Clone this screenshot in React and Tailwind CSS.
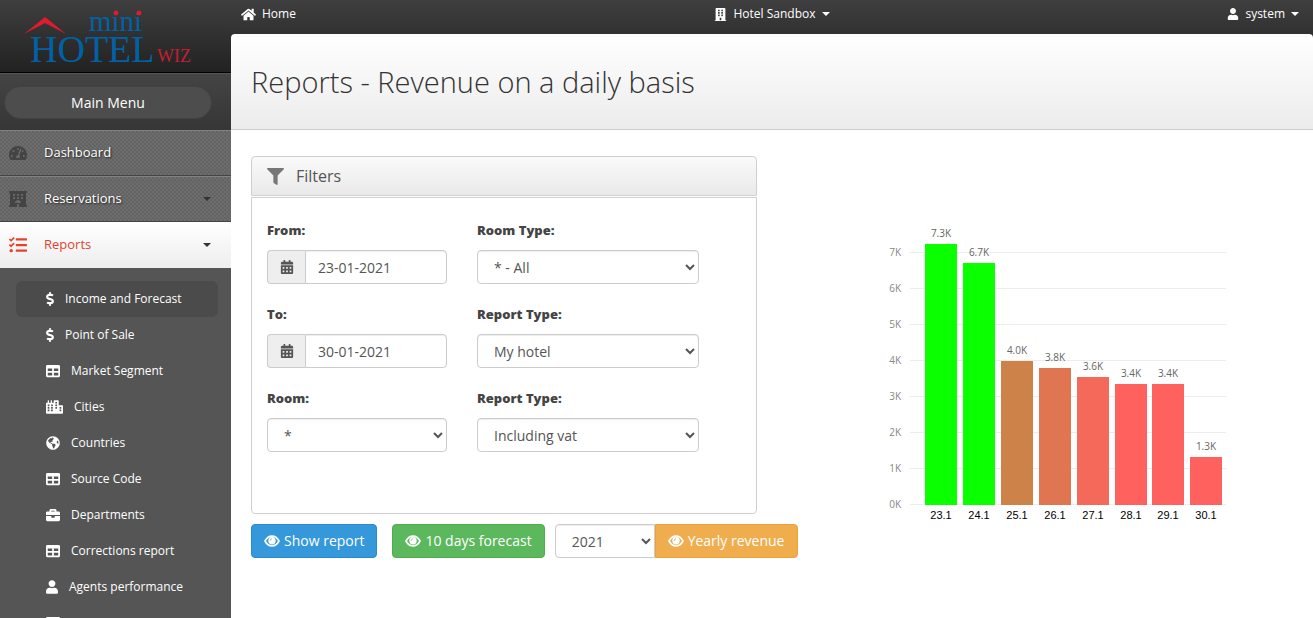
import { useState } from 'react';
import {
  FaBriefcase,
  FaBuilding,
  FaCalendarAlt,
  FaCity,
  FaDollarSign,
  FaFilter,
  FaGlobeAmericas,
  FaHome,
  FaHotel,
  FaTable,
  FaTachometerAlt,
  FaTasks,
  FaUser,
} from 'react-icons/fa';

const reportLinks = [
  { label: 'Income and Forecast', icon: FaDollarSign, iconClass: 'w-2' },
  { label: 'Point of Sale', icon: FaDollarSign, iconClass: 'w-2' },
  { label: 'Market Segment', icon: FaTable, iconClass: 'w-3.5' },
  { label: 'Cities', icon: FaCity, iconClass: 'w-[17px]' },
  { label: 'Countries', icon: FaGlobeAmericas, iconClass: 'w-3.5' },
  { label: 'Source Code', icon: FaTable, iconClass: 'w-3.5' },
  { label: 'Departments', icon: FaBriefcase, iconClass: 'w-3.5' },
  { label: 'Corrections report', icon: FaTable, iconClass: 'w-3.5' },
  { label: 'Agents performance', icon: FaUser, iconClass: 'w-3' },
  { label: '', icon: FaTable, iconClass: 'w-3.5' },
];

const revenue = [
  { day: '23.1', value: 7250, label: '7.3K', color: '#0aff00' },
  { day: '24.1', value: 6720, label: '6.7K', color: '#0aff00' },
  { day: '25.1', value: 4000, label: '4.0K', color: '#cc8249' },
  { day: '26.1', value: 3805, label: '3.8K', color: '#e07552' },
  { day: '27.1', value: 3555, label: '3.6K', color: '#f5695b' },
  { day: '28.1', value: 3360, label: '3.4K', color: '#ff615e' },
  { day: '29.1', value: 3360, label: '3.4K', color: '#ff615e' },
  { day: '30.1', value: 1330, label: '1.3K', color: '#ff615e' },
];

const field = 'h-[34px] border border-[#ccc] bg-white text-sm text-[#555] shadow-[inset_0_1px_1px_rgba(0,0,0,0.075)]';
const fieldLabel = 'mb-[10px] block text-[13px] leading-5 font-extrabold text-[#444]';

function Logo() {
  return (
    <svg width="200" height="72" viewBox="0 0 200 72" role="img" aria-label="mini Hotel Wiz">
      <path d="M24 34 L45 17 L66 34 L45 23 Z" fill="#e01b2d" />
      <g fontFamily="Liberation Serif, serif">
        <text x="89" y="31" fontSize="29" fill="#0062a5">mini</text>
        <text x="30" y="62" fontSize="38" fill="#0062a5">HOTEL</text>
        <text x="157" y="62" fontSize="18" fill="#c3202f">WIZ</text>
      </g>
      <circle cx="116" cy="13" r="2.4" fill="#e01b2d" />
      <circle cx="139" cy="13" r="2.4" fill="#e01b2d" />
    </svg>
  );
}

function EyeIcon() {
  return (
    <svg width="16" height="14" viewBox="0 0 16 14" fill="none" aria-hidden="true">
      <path d="M1 7 C3 3.4 5.4 2.2 8 2.2 C10.6 2.2 13 3.4 15 7 C13 10.8 10.6 12 8 12 C5.4 12 3 10.8 1 7 Z" stroke="currentColor" strokeWidth="1.7" />
      <circle cx="8" cy="6.8" r="3.7" fill="currentColor" />
      <path d="M6.2 6.8 C6.2 5.6 6.9 4.9 8 4.9" stroke="#000000" strokeOpacity="0.3" />
    </svg>
  );
}

function Caret({ className }) {
  return (
    <svg width="8" height="4" viewBox="0 0 8 4" className={className} aria-hidden="true">
      <path d="M0 0 H8 L4 4 Z" fill="currentColor" />
    </svg>
  );
}

/** One row of the main navigation */
function NavItem({ icon: Icon, label, active, expandable }) {
  return (
    <a
      href="#"
      className={`flex h-[46px] items-center border-b pl-[9px] pr-5 text-[13px] ${
        active
          ? 'border-[#eee] bg-linear-to-b from-white to-[#eee] text-[#e5412d]'
          : 'border-[#444] border-t border-t-[#828282] bg-[#686868] bg-[conic-gradient(#6d6d6d_25%,#636363_0_50%,#6d6d6d_0_75%,#636363_0)] bg-size-[4px_4px] text-white [text-shadow:1px_1px_2px_rgba(0,0,0,0.7)]'
      }`}
    >
      <Icon className={`size-[18px] ${active ? 'text-[#e5412d]' : 'text-[#444]'}`} />
      <span className="ml-[17px] grow">{label}</span>
      {expandable && <Caret className="text-[#333]" />}
    </a>
  );
}

function Sidebar() {
  return (
    <aside className="flex w-[231px] shrink-0 flex-col overflow-hidden bg-[#555]">
      <a href="#" className="block h-[73px] shrink-0 border-b border-black bg-linear-to-b from-[#3f3f3f] to-[#222]">
        <Logo />
      </a>
      <div className="shrink-0 border-t border-[#555] bg-linear-to-b from-[#444] to-[#363636] pt-3 pb-[11px] pl-1">
        <button className="h-[33px] w-52 rounded-full border border-[#424242] bg-[#4d4d4d] text-sm text-white">
          Main Menu
        </button>
      </div>
      <nav className="shrink-0">
        <NavItem icon={FaTachometerAlt} label="Dashboard" />
        <NavItem icon={FaHotel} label="Reservations" expandable />
        <NavItem icon={FaTasks} label="Reports" active expandable />
        <ul className="px-4 pt-[13px]">
          {reportLinks.map(({ label, icon: Icon, iconClass }, index) => (
            <li key={index} className="w-[202px]">
              <a
                href="#"
                className={`flex h-9 items-center gap-[11px] rounded-md pl-[30px] text-xs text-white ${
                  index === 0 ? 'bg-[#4b4b4b]' : ''
                }`}
              >
                <Icon className={`h-3.5 ${iconClass}`} />
                {label}
              </a>
            </li>
          ))}
        </ul>
      </nav>
    </aside>
  );
}

function TopBar() {
  return (
    <div className="grid h-[34px] grid-cols-[1fr_auto_1fr] items-start px-[10px] pt-1 text-xs leading-5 text-white">
      <a href="#" className="flex items-center gap-1.5 justify-self-start">
        <FaHome className="size-[15px]" /> Home
      </a>
      <button className="flex items-center gap-1.5">
        <FaBuilding className="size-[13px]" /> Hotel Sandbox <Caret />
      </button>
      <button className="flex items-center gap-1.5 justify-self-end pr-1">
        <FaUser className="size-3" /> system <Caret />
      </button>
    </div>
  );
}

function SelectField({ id, label, options }) {
  return (
    <div>
      <label htmlFor={id} className={fieldLabel}>{label}</label>
      <select id={id} className={`${field} w-full rounded px-3`}>
        {options.map((option) => (
          <option key={option}>{option}</option>
        ))}
      </select>
    </div>
  );
}

function DateField({ id, label, value, onChange }) {
  return (
    <div>
      <label htmlFor={id} className={fieldLabel}>{label}</label>
      <div className="flex">
        <span className="flex w-[38px] shrink-0 items-center justify-center rounded-l border border-r-0 border-[#ccc] bg-[#eee] text-[#555]">
          <FaCalendarAlt className="size-3.5" />
        </span>
        <input
          id={id}
          type="text"
          value={value}
          onChange={(e) => onChange(e.target.value)}
          className={`${field} w-full min-w-0 rounded-r px-3`}
        />
      </div>
    </div>
  );
}

function Filters() {
  const [from, setFrom] = useState('23-01-2021');
  const [to, setTo] = useState('30-01-2021');

  return (
    <section className="self-start">
      <div className="mb-px flex h-10 items-center gap-3 rounded-t border border-[#d0d0d0] bg-linear-to-b from-[#fafafa] to-[#e9e9e9] pl-[15px]">
        <FaFilter className="size-[17px] text-[#777]" />
        <h2 className="text-base text-[#555]">Filters</h2>
      </div>
      <div className="grid grid-cols-[180px_222px] gap-x-[30px] gap-y-5 rounded-b border border-[#d0d0d0] px-[15px] pt-[22px] pb-[61px]">
        <DateField id="from" label="From:" value={from} onChange={setFrom} />
        <SelectField id="room-type" label="Room Type:" options={['* - All']} />
        <DateField id="to" label="To:" value={to} onChange={setTo} />
        <SelectField id="report-type" label="Report Type:" options={['My hotel']} />
        <SelectField id="room" label="Room:" options={['*']} />
        <SelectField id="vat-type" label="Report Type:" options={['Including vat', 'Excluding vat']} />
      </div>
    </section>
  );
}

/** Daily revenue, 36px of height for each 1K */
function RevenueChart() {
  const base = 285;

  return (
    <svg width="400" height="304" viewBox="0 0 400 304" role="img" aria-label="Revenue per day">
      {[0, 1, 2, 3, 4, 5, 6, 7].map((k) => (
        <g key={k}>
          <rect x="70" y={base - k * 36 - 1} width="316" height="1" fill="#ececec" />
          <text x="61" y={base - k * 36 + 3} textAnchor="end" fontSize="10" fill="#888">{k}K</text>
        </g>
      ))}
      {revenue.map((bar, index) => {
        const x = Math.round(85 + index * 37.9);
        const height = Math.round((bar.value * 36) / 1000);
        return (
          <g key={bar.day}>
            <rect x={x} y={base - height} width="32" height={height} fill={bar.color} />
            <text x={x + 16} y={base - height - 7} textAnchor="middle" fontSize="10" fill="#666">{bar.label}</text>
            <text x={x + 16} y={base + 14} textAnchor="middle" fontSize="11" fontFamily="Liberation Sans, sans-serif" fill="#000">{bar.day}</text>
          </g>
        );
      })}
    </svg>
  );
}

export default function App() {
  const [year, setYear] = useState('2021');

  return (
    <div className="flex h-screen overflow-hidden bg-white font-['Open_Sans',sans-serif]">
      <Sidebar />
      <div className="flex min-w-0 grow flex-col">
        <div className="bg-linear-to-b from-[#3f3f3f] to-[#222] to-[73px]">
          <TopBar />
          <header className="flex h-24 items-center rounded-t border-b border-[#ccc] bg-linear-to-b from-white to-[#ececec] px-5">
            <h1 className="text-[29px] font-light text-[#333]">Reports - Revenue on a daily basis</h1>
          </header>
        </div>
        <main className="px-5 pt-[26px]">
          <div className="grid grid-cols-2 gap-[30px]">
            <Filters />
            <div className="flex justify-center pt-16">
              <RevenueChart />
            </div>
          </div>
          <div className="flex h-[34px] text-sm whitespace-nowrap text-white">
            <button className="mr-[15px] flex items-center gap-1 rounded border border-[#2a8bcc] bg-[#3498db] px-3">
              <EyeIcon /> Show report
            </button>
            <button className="mr-[10px] flex items-center gap-1 rounded border border-[#4cae4c] bg-[#5cb85c] px-3">
              <EyeIcon /> 10 days forecast
            </button>
            <select
              aria-label="Year"
              value={year}
              onChange={(e) => setYear(e.target.value)}
              className={`${field} w-[100px] rounded-l px-3`}
            >
              <option>2021</option>
              <option>2020</option>
            </select>
            <button className="flex items-center gap-1 rounded-r border border-[#eea236] bg-[#f0ad4e] px-3">
              <EyeIcon /> Yearly revenue
            </button>
          </div>
        </main>
      </div>
    </div>
  );
}
